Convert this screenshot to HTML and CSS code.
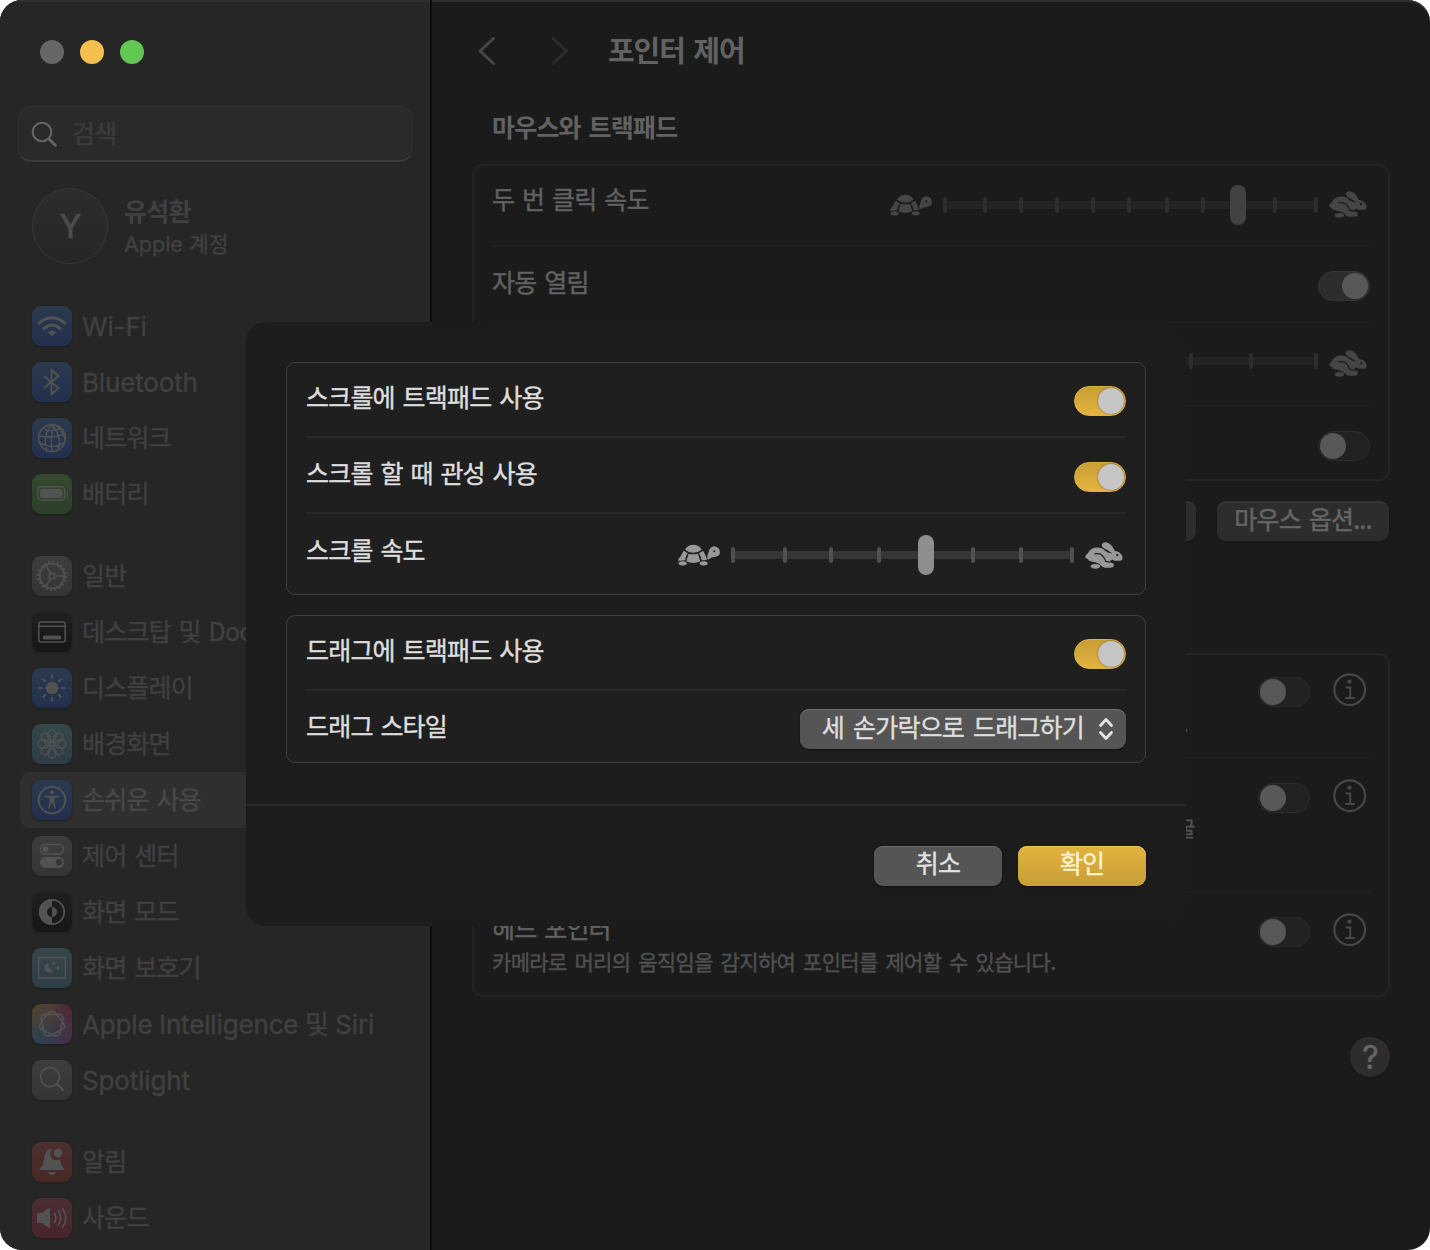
FILE: index.html
```html
<!DOCTYPE html>
<html lang="ko">
<head>
<meta charset="utf-8">
<title>포인터 제어</title>
<link rel="stylesheet" href="styles.css">
</head>
<body>
<svg class="defs" width="0" height="0">
  <symbol id="turtle" viewBox="0 0 126 64">
    <path d="M21 16Q29 1 46 1Q63 1 71 16Q60 25 46 25Q32 25 21 16Z"/>
    <path d="M32 28Q46 31 60 28L67 51Q46 61 25 51Z"/>
    <path d="M17 19L29 27Q22 37 22 48Q10 50 0 49Q0 43 6 39Z"/>
    <path d="M75 19L63 27Q69 37 71 48Q80 48 87 46Q84 32 75 19Z"/>
    <ellipse cx="14" cy="57" rx="12" ry="6.500"/>
    <ellipse cx="77" cy="57" rx="12" ry="6.500"/>
    <path d="M88 44Q87 34 91 26Q95 7 109 6Q126 8 126 26Q124 37 109 38Q98 39 95 43Q91 46 88 44Z"/>
    <circle class="cut-fill" cx="109" cy="21" r="3"/>
  </symbol>
  <symbol id="rabbit" viewBox="0 0 114 82">
    <path d="M0 45Q2 38 7 36Q15 18 34 17Q50 16 61 27Q70 34 82 35Q74 28 62 22Q50 16 50 9Q52 0 64 1Q80 4 90 27Q108 29 113 44Q115 56 106 57L90 57L82 53L76 58Q73 62 80 63Q88 64 87 72Q85 79 74 78L58 78Q48 74 42 66Q34 61 22 60Q10 58 8 52Q0 50 0 45Z"/>
    <ellipse cx="31" cy="74" rx="14" ry="7"/>
    <path class="cut" d="M29 36Q46 33 53 42Q58 48 63 59L74 61"/>
    <circle class="cut-fill" cx="97" cy="40" r="3.5"/>
  </symbol>
  <symbol id="info" viewBox="0 0 34 34">
    <circle class="line" cx="16.700" cy="16.700" r="15.400" stroke-width="2.2"/>
    <circle cx="16.500" cy="8.700" r="2.100"/>
    <path class="line" d="M13.500 14.600H17.200V25M13 25H21" stroke-width="2"/>
  </symbol>
</svg>

<div class="window">
  <aside class="sidebar">
    <div class="lights"><i class="light"></i><i class="light light-min"></i><i class="light light-max"></i></div>
    <div class="search">
      <svg class="search-icon" width="28" height="28" viewBox="0 0 28 28"><circle cx="12" cy="12" r="9.3"/><path d="M19 19L25.5 25.5" stroke-width="2.8"/></svg>
      <span>검색</span>
    </div>
    <div class="account">
      <div class="avatar">Y</div>
      <div class="account-text"><div class="account-name">유석환</div><div class="account-sub">Apple 계정</div></div>
    </div>

    <nav class="nav">
      <div class="group">
        <div class="item"><svg class="icon blue" viewBox="0 0 40 40"><g class="s" stroke-width="3"><path d="M7.2 17Q20 6.500 32.800 17"/><path d="M12 22.500Q20 15.500 28 22.500"/></g><path class="f" d="M20 30L15.800 26.200Q20 22.800 24.200 26.200Z"/></svg><span class="en">Wi-Fi</span></div>
        <div class="item"><svg class="icon blue" viewBox="0 0 40 40"><path class="s" stroke-width="1.800" d="M12.500 14.500L26.500 26L19.500 32.300V7.700L26.500 14L12.500 25.500"/></svg><span class="en">Bluetooth</span></div>
        <div class="item"><svg class="icon blue" viewBox="0 0 40 40"><g class="s" stroke-width="1.500"><circle cx="20" cy="20" r="13.500"/><path d="M20 6.500Q10 17 15 33M20 6.500Q31 19 26 32M22 6.700Q18 19 20 33M24 7.500Q31 11 33 22M17 7Q9 10 8 15M7 18Q20 21 33 16M8 25Q20 32 32 25M11 10Q19 16 28 10"/></g></svg><span>네트워크</span></div>
        <div class="item"><svg class="icon green" viewBox="0 0 40 40"><rect class="s" x="5.800" y="12.800" width="27" height="13.400" rx="4" stroke-width="1.400"/><rect class="f" x="8" y="15" width="22.500" height="9" rx="2"/><path class="f" d="M35 17Q37 19.500 35 22Z"/></svg><span>배터리</span></div>
      </div>
      <div class="group">
        <div class="item"><svg class="icon gray" viewBox="0 0 40 40"><circle class="teeth" cx="20" cy="20" r="13.900" stroke-width="2" stroke-dasharray="1.900 2.467"/><circle class="s" cx="20" cy="20" r="12.300" stroke-width="1.700"/><circle class="s" cx="20" cy="20" r="2.800" stroke-width="1.500"/><path class="s" stroke-width="1.500" d="M23 20H32M18.500 17.400L14 9.500M18.500 22.600L14 30.500"/></svg><span>일반</span></div>
        <div class="item"><svg class="icon black" viewBox="0 0 40 40"><rect class="s" x="6.800" y="10" width="26.400" height="20" rx="2" stroke-width="1.500"/><path class="s" d="M7 14.200H33" stroke-width="1.500"/><rect class="f" x="11" y="23.500" width="18" height="4" rx="1"/></svg><span>데스크탑 및 Dock</span></div>
        <div class="item"><svg class="icon blue" viewBox="0 0 40 40"><circle class="f" cx="20" cy="20" r="6.300"/><path class="s" stroke-width="2" d="M20 7.500V10M20 30V32.500M7.500 20H10M30 20H32.500M11.200 11.200L13 13M27 27L28.800 28.800M28.800 11.200L27 13M13 27L11.200 28.800"/></svg><span>디스플레이</span></div>
        <div class="item"><svg class="icon teal" viewBox="0 0 40 40"><g class="s" stroke-width="1.400"><circle cx="20" cy="20" r="2"/><g id="petals"><ellipse cx="20" cy="11.500" rx="4" ry="5.500"/><ellipse cx="20" cy="28.500" rx="4" ry="5.500"/><ellipse cx="11.500" cy="20" rx="5.500" ry="4"/><ellipse cx="28.500" cy="20" rx="5.500" ry="4"/></g><use href="#petals" transform="rotate(45 20 20)"/></g></svg><span>배경화면</span></div>
        <div class="item selected"><svg class="icon blue" viewBox="0 0 40 40"><circle class="s" cx="20" cy="20" r="13.300" stroke-width="1.900"/><circle class="f" cx="20" cy="12.600" r="2"/><path class="f" d="M13 15.200L18 16H22L27 15.200V16.800L22.500 18V22L24 28.500H22.500L20.500 23H19.500L17.500 28.500H16L17.500 22V18L13 16.800Z"/></svg><span>손쉬운 사용</span></div>
        <div class="item"><svg class="icon gray" viewBox="0 0 40 40"><rect class="s" x="8.500" y="8.500" width="23" height="9.500" rx="4.750" stroke-width="1.500"/><circle class="f" cx="13.700" cy="13.300" r="3"/><rect class="f" x="8" y="21" width="24" height="11" rx="5.500"/><circle cx="27" cy="26.300" r="3.200" fill="#363636"/></svg><span>제어 센터</span></div>
        <div class="item"><svg class="icon black" viewBox="0 0 40 40"><circle class="s" cx="20" cy="20" r="12.200" stroke-width="1.700"/><path class="f" d="M20 7A13 13 0 0 0 20 33V25A5 5 0 0 1 20 15Z"/><path class="f" d="M20 15A5 5 0 0 1 20 25Z"/></svg><span>화면 모드</span></div>
        <div class="item"><svg class="icon teal" viewBox="0 0 40 40"><rect class="s" x="6.700" y="9.500" width="26.600" height="20.500" stroke-width="1.500"/><path class="f" d="M16.500 15A5 5 0 1 0 22 22A5.500 5.500 0 0 1 16.500 15ZM21.500 13L22.300 14.700L24 15.500L22.300 16.300L21.500 18L20.700 16.300L19 15.500L20.700 14.700ZM26 17L27 19L29 20L27 21L26 23L25 21L23 20L25 19Z"/></svg><span>화면 보호기</span></div>
        <div class="item"><svg class="icon rainbow" viewBox="0 0 40 40"><path class="s" stroke-width="1.600" d="M16.250 9.300Q20 4.600 23.750 9.300L31.250 18.700Q35 23.400 29.600 26L18.700 31.300Q13.300 33.900 12 28L9.300 16.300Q8 10.400 14 10.400H26Q32 10.400 30.700 16.300L28 28Q26.700 33.900 21.300 31.300L10.400 26Q5 23.400 8.750 18.700Z"/></svg><span class="en">Apple Intelligence 및 Siri</span></div>
        <div class="item"><svg class="icon gray" viewBox="0 0 40 40"><circle class="s" cx="18" cy="17" r="9.500" stroke-width="1.600"/><path class="s" d="M25 24L31 30" stroke-width="2.400"/></svg><span class="en">Spotlight</span></div>
      </div>
      <div class="group">
        <div class="item"><svg class="icon red" viewBox="0 0 40 40"><path class="f" d="M20 6.500Q12.500 8 12 17Q12 22 8 26.500Q8 28 9 28H31Q32 28 32 26.500Q28 22 28 17A6 6 0 0 1 20.500 7ZM16 30H24Q23 33 20 33Q17 33 16 30Z"/><circle class="f" cx="26" cy="11" r="4.300"/></svg><span>알림</span></div>
        <div class="item"><svg class="icon pink" viewBox="0 0 40 40"><path class="f" d="M6.500 15H10L17 10Q18 10 18 11V29Q18 30 17 30L10 25H6.500Q5 25 5 23.500V16.500Q5 15 6.500 15Z"/><path class="s" stroke-width="1.700" d="M22.500 15.500Q25 20 22.500 24.500M26.500 13Q31 20 26.500 27M30.500 10.500Q37 20 30.500 29.500"/></svg><span>사운드</span></div>
      </div>
    </nav>
  </aside>

  <main class="main">
    <header class="header">
      <svg class="back" width="20" height="30" viewBox="0 0 20 30"><path d="M16.500 2.500L3 15L16.500 27.500"/></svg>
      <svg class="forward" width="20" height="30" viewBox="0 0 20 30"><path d="M3 2.500L16.500 15L3 27.500"/></svg>
      <h1>포인터 제어</h1>
    </header>
    <h2>마우스와 트랙패드</h2>
    <section class="card">
      <div class="row row-double">
        <span class="label">두 번 클릭 속도</span>
        <svg class="animal" width="42" height="22"><use href="#turtle"/></svg>
        <svg class="slider" width="375" height="42" viewBox="943 -21 375 42"><rect class="track" x="945" y="-4" width="371" height="8"/><path class="ticks" d="M945-6V6M985-6V6M1021-6V6M1057-6V6M1093-6V6M1129-6V6M1167-6V6M1203-6V6M1275-6V6M1316-6V6"/><rect class="thumb" x="1230" y="-20" width="16" height="40" rx="8"/></svg>
        <svg class="animal hare" width="38" height="27"><use href="#rabbit"/></svg>
      </div>
      <div class="row row-spring"><span class="label">자동 열림</span><span class="toggle on"></span></div>
      <div class="row row-speed">
        <span class="label">자동 열림 속도</span>
        <svg class="slider" width="375" height="42" viewBox="943 -21 375 42"><rect class="track" x="945" y="-4" width="371" height="8"/><path class="ticks" d="M1191-6V6M1251-6V6M1316-6V6"/></svg>
        <svg class="animal hare" width="38" height="27"><use href="#rabbit"/></svg>
      </div>
      <div class="row row-ignore"><span class="toggle"></span></div>
    </section>
    <div class="actions"><span class="btn btn-pad"></span><span class="btn">마우스 옵션...</span></div>
    <section class="card card-alt">
      <div class="alt alt-keys">
        <div class="desc"><p class="end end-keys">있습니다.</p></div>
        <span class="toggle"></span><svg class="info" width="34" height="34"><use href="#info"/></svg>
      </div>
      <div class="alt alt-actions">
        <div class="desc"><p class="end end-actions">얼굴</p></div>
        <span class="toggle"></span><svg class="info" width="34" height="34"><use href="#info"/></svg>
      </div>
      <div class="alt alt-head">
        <div class="desc"><span class="label">헤드 포인터</span><p>카메라로 머리의 움직임을 감지하여 포인터를 제어할 수 있습니다.</p></div>
        <span class="toggle"></span><svg class="info" width="34" height="34"><use href="#info"/></svg>
      </div>
    </section>
    <div class="help">?</div>
  </main>

  <div class="dialog">
    <div class="dialog-body">
      <section class="panel">
        <div class="prow"><span class="label">스크롤에 트랙패드 사용</span><span class="toggle gold"></span></div>
        <div class="prow"><span class="label">스크롤 할 때 관성 사용</span><span class="toggle gold"></span></div>
        <div class="prow prow-slider">
          <span class="label">스크롤 속도</span>
          <svg class="animal" width="42" height="22"><use href="#turtle"/></svg>
          <svg class="slider" width="343" height="42" viewBox="731 -21 343 42"><rect class="track" x="733" y="-4" width="339" height="8"/><path class="ticks" d="M733-6V6M785-6V6M831-6V6M879-6V6M973-6V6M1021-6V6M1072-6V6"/><rect class="thumb" x="918" y="-20" width="16" height="40" rx="8"/></svg>
          <svg class="animal hare" width="38" height="27"><use href="#rabbit"/></svg>
        </div>
      </section>
      <section class="panel">
        <div class="prow"><span class="label">드래그에 트랙패드 사용</span><span class="toggle gold"></span></div>
        <div class="prow prow-style"><span class="label">드래그 스타일</span>
          <span class="select"><span>세 손가락으로 드래그하기</span><svg width="16" height="24" viewBox="0 0 16 24"><path d="M2.500 8.500L8 2.500L13.500 8.500M2.500 15.500L8 21.500L13.500 15.500"/></svg></span>
        </div>
      </section>
    </div>
    <footer class="dialog-foot"><button class="push">취소</button><button class="push primary">확인</button></footer>
  </div>
</div>
</body>
</html>
```
FILE: styles.css
```css
* { box-sizing: border-box; }
body { margin: 0; background: #fff; overflow: hidden; }
h1, h2, p { margin: 0; }
.defs { display: block; }

.window {
  position: relative;
  display: flex;
  width: 1430px;
  height: 1250px;
  border-radius: 22px;
  overflow: hidden;
  background: #1b1b1b;
  box-shadow: inset 0 2px #2e2e2e;
  font: 400 25px/36px "Noto Sans CJK KR", sans-serif;
  letter-spacing: -0.8px;
  word-spacing: 1.6px;
  white-space: nowrap;
  -webkit-text-stroke: 0.4px;
  --cut: #1b1b1b;
}

/* sidebar */
.sidebar {
  width: 432px;
  flex: none;
  padding: 40px 18px 0;
  background: #262626;
  border-right: 2px solid #0c0c0c;
  box-shadow: inset 0 2px #303030;
  color: #404040;
}
.lights { display: flex; gap: 16px; padding-left: 22px; }
.light { width: 24px; height: 24px; border-radius: 50%; background: #666; }
.light-min { background: #f5bf4f; }
.light-max { background: #62c554; }
.search {
  display: flex;
  align-items: center;
  gap: 14px;
  height: 56px;
  margin-top: 42px;
  padding: 0 12px 0 11px;
  border: 1px solid #303030;
  border-bottom: 2px solid #393939;
  border-radius: 12px;
  background: #2a2a2a;
  color: #3c3c3c;
}
.search span { position: relative; top: -2px; }
.search-icon { fill: none; stroke: #666; stroke-width: 2; stroke-linecap: round; }
.account { display: flex; gap: 16px; margin: 26px 0 34px 14px; }
.avatar {
  width: 76px;
  height: 76px;
  border: 1px solid #383838;
  border-radius: 50%;
  background: linear-gradient(#2d2d2d, #262626);
  color: #4b4b4b;
  font: 500 32px/76px Inter, sans-serif;
  text-align: center;
}
.account-text { padding-top: 4px; }
.account-name { font-weight: 700; line-height: 36px; -webkit-text-stroke: 0; }
.account-sub {
  font: 400 21.5px/32px Inter, "Noto Sans CJK KR", sans-serif;
  letter-spacing: 0;
  word-spacing: 0;
}
.nav { display: flex; flex-direction: column; gap: 26px; }
.item {
  display: flex;
  align-items: center;
  gap: 10px;
  height: 56px;
  margin: 0 0 0 2px;
  padding-left: 12px;
  border-radius: 10px;
}
.item span { position: relative; top: -2px; }
.item .en { top: 1px; font-family: Inter, "Noto Sans CJK KR", sans-serif; font-size: 26px; letter-spacing: -0.15px; word-spacing: -0.6px; }
.selected { background: #2f2f2f; color: #484848; }
.icon { width: 40px; height: 40px; border-radius: 9px; box-shadow: 0 1px 2px #1e1e1e; }
.icon .s { fill: none; stroke: #525252; stroke-linecap: round; stroke-linejoin: round; }
.icon .f { fill: #525252; }
.teeth { fill: none; stroke: #525252; }
.blue { background: linear-gradient(#2b3a4e, #22304e); }
.green { background: linear-gradient(#34492f, #2c4029); }
.gray { background: linear-gradient(#3e3e3e, #343434); }
.black { background: linear-gradient(#202020, #161616); }
.teal { background: linear-gradient(#36474b, #2c3d47); }
.red { background: linear-gradient(#4b302e, #482825); }
.pink { background: linear-gradient(#4b2e34, #48242c); }
.rainbow { background: radial-gradient(circle at 0 0, #59432a, transparent 65%), radial-gradient(circle at 100% 15%, #552637, transparent 65%), radial-gradient(circle at 100% 100%, #443049, transparent 60%), #2c4050; }

/* main pane */
.main { flex: 1; padding: 0 40px; color: #626262; }
.header { display: flex; align-items: center; height: 102px; padding-left: 5px; }
.header svg { fill: none; stroke-width: 2.8; stroke-linecap: round; stroke-linejoin: round; }
.back { stroke: #484848; }
.forward { margin-left: 53px; stroke: #2d2d2d; }
h1, h2 { font-weight: 700; -webkit-text-stroke: 0; }
h1 { margin: -4px 0 0 38px; font-size: 29px; line-height: 40px; letter-spacing: -1.1px; }
h2 { height: 62px; padding: 6px 0 0 20px; font-size: 25px; line-height: 36px; }
.card { border: 2px solid #232323; border-radius: 11px; padding: 0 18px; }
.row { display: flex; align-items: center; }
.row + .row, .alt + .alt { border-top: 2px solid #1f1f1f; }
.label { flex: 1; padding-bottom: 9px; }
.row-double { height: 79px; padding-bottom: 2px; }
.row-double .label, .prow-slider .label { padding-bottom: 13px; }
.row-spring { height: 76px; padding-top: 3px; }
.row-speed { height: 84px; padding-bottom: 1px; }
.row-speed .slider { position: relative; top: -3px; }
.row-ignore { height: 74px; padding-top: 5px; justify-content: flex-end; }
.animal { flex: none; fill: #454545; }
.hare { margin: 0 3px 0 11px; }
.slider { flex: none; margin-left: 11px; }
.track { fill: #232323; }
.ticks { stroke: #2d2d2d; stroke-width: 4; stroke-linecap: round; }
.thumb { fill: #424242; }
.cut { fill: none; stroke: var(--cut); stroke-width: 4; stroke-linecap: round; }
.cut-fill { fill: var(--cut); }
.toggle {
  flex: none;
  display: flex;
  align-items: center;
  width: 52px;
  height: 30px;
  padding: 0 1px;
  border: 1px solid #2c2c2c;
  border-radius: 15px;
  background: #222;
}
.toggle::before { content: ""; width: 26px; height: 26px; border-radius: 50%; background: #585858; }
.toggle.on { justify-content: flex-end; background: #2d2d2d; border-color: #363636; }
.actions { display: flex; justify-content: flex-end; gap: 21px; margin: 20px 1px 0 0; }
.btn {
  width: 172px;
  height: 40px;
  border-radius: 9px;
  background: #2d2d2d;
  box-shadow: inset 0 2px #343434, 0 1px 2px #161616;
  color: #666;
  line-height: 34px;
  text-align: center;
}
.card-alt { height: 344px; margin-top: 112px; }
.alt { display: flex; }
.alt .toggle { margin: 22px 23px 0 0; }
.alt .info { flex: none; margin: 18px 3px 0 0; }
.alt + .alt .toggle { margin-top: 24px; }
.alt + .alt .info { margin-top: 20px; }
.info { fill: #484848; }
.line { fill: none; stroke: #484848; stroke-linecap: round; }
.desc { flex: 1; font-size: 21px; line-height: 30px; letter-spacing: -0.65px; word-spacing: 2.5px; color: #505050; }
.desc .label { display: block; padding: 0; font-size: 25px; line-height: 36px; letter-spacing: -0.8px; word-spacing: 1.6px; color: #626262; }
.alt-keys { height: 102px; }
.alt-actions { height: 134px; }
.alt-head .desc { padding-top: 16px; }
.alt-head p { line-height: 32px; }
.end { text-align: right; }
.end-keys { padding: 53px 70px 0 0; }
.end-actions { padding: 53px 63px 0 0; }
.help {
  width: 40px;
  height: 40px;
  margin: 40px 0 0 auto;
  border-radius: 50%;
  background: #2d2d2d;
  box-shadow: inset 0 1px #343434, 0 1px 2px #141414;
  color: #666;
  font: 400 32px/41px Inter, sans-serif;
  text-align: center;
}

/* sheet above the window */
.dialog {
  position: absolute;
  left: 246px;
  top: 322px;
  width: 940px;
  height: 604px;
  border-radius: 20px;
  background: #1c1c1c;
  color: #dedede;
  --cut: #1f1f1f;
}
.dialog-body {
  display: flex;
  flex-direction: column;
  gap: 20px;
  height: 484px;
  padding: 40px 40px 0;
  border-bottom: 2px solid #282828;
}
.panel { padding: 0 19px; border: 1px solid #404040; border-radius: 9px; background: #1f1f1f; }
.prow { display: flex; align-items: center; height: 75px; padding-top: 2px; border-bottom: 2px solid #292929; }
.prow + .prow { height: 76px; padding-top: 3px; }
.prow:last-child { border-bottom: 0; }
.prow.prow-slider { height: 80px; padding-top: 2px; }
.prow.prow-style { height: 71px; padding-top: 4px; }
.prow-style .label { padding-bottom: 7px; }
.dialog .animal { fill: #989898; }
.dialog .track { fill: #363636; }
.dialog .ticks { stroke: #505050; }
.dialog .thumb { fill: #8e8e8e; }
.toggle.gold {
  justify-content: flex-end;
  border-color: #dcb04a;
  background: linear-gradient(#c89f35, #e3b440);
}
.gold::before { background: #c6c6c6; box-shadow: 0 0 2px #705a20; }
.select {
  display: flex;
  align-items: center;
  justify-content: flex-end;
  gap: 14px;
  width: 326px;
  height: 40px;
  padding-right: 12px;
  border-radius: 9px;
  background: #555;
  box-shadow: inset 0 1px #707070, 0 1px 2px #111;
}
.select span { position: relative; top: -3px; word-spacing: 2.8px; }
.select svg { fill: none; stroke: #e4e4e4; stroke-width: 2.8; stroke-linecap: round; stroke-linejoin: round; }
.dialog-foot { display: flex; justify-content: flex-end; gap: 16px; padding: 40px 40px 0; }
.push {
  width: 128px;
  height: 40px;
  padding: 0 0 7px;
  border: 0;
  border-radius: 9px;
  background: #555;
  box-shadow: inset 0 1px #6a6a6a, 0 1px 2px #111;
  color: #e2e2e2;
  font: inherit;
  letter-spacing: inherit;
  line-height: 33px;
}
.primary { background: linear-gradient(#e2b33f, #c89f35); box-shadow: inset 0 1px #edc25b, 0 1px 2px #111; color: #fdf2d3; }
```
